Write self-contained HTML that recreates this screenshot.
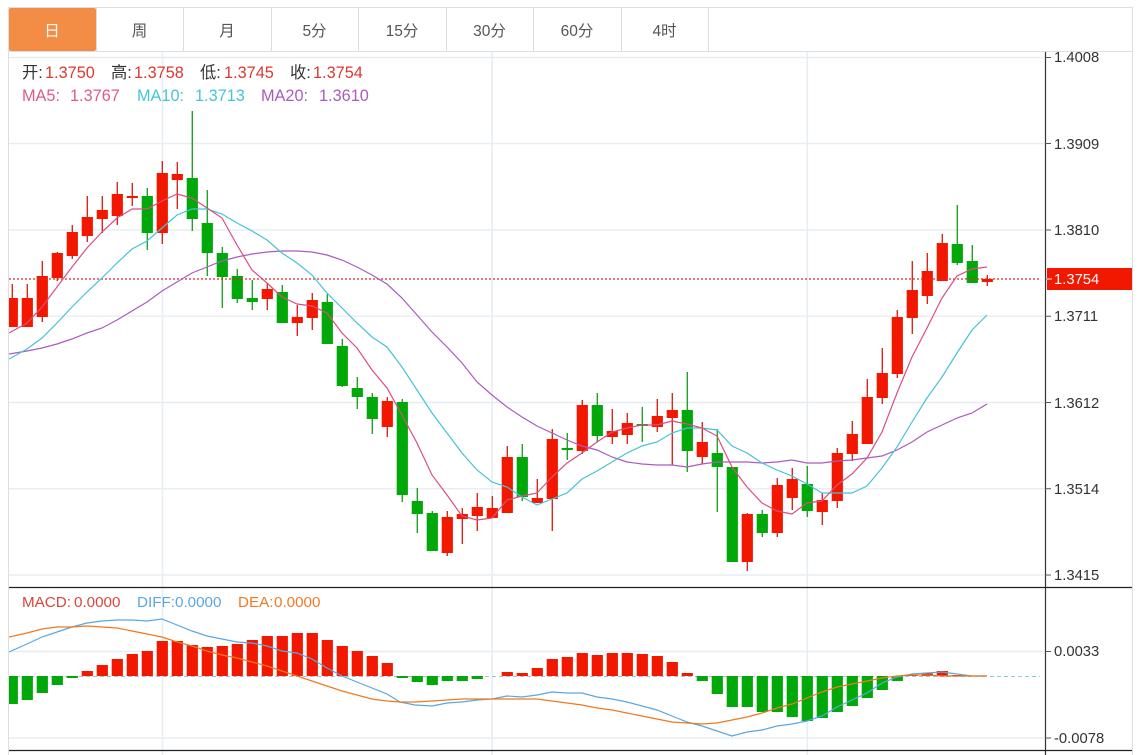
<!DOCTYPE html>
<html lang="zh"><head><meta charset="utf-8"><title>K</title>
<style>
html,body{margin:0;padding:0;background:#fff;width:1142px;height:755px;overflow:hidden}
svg{display:block;position:absolute;left:0;top:0}
text{font-family:"Liberation Sans","Noto Sans CJK SC",sans-serif}
.tab{font-size:15.5px;fill:#555;text-anchor:middle}
.ax{font-size:14.8px;fill:#333}
.l{font-size:16.3px}
.m{font-size:15.2px}
</style></head><body>
<svg width="1142" height="755" viewBox="0 0 1142 755" xmlns="http://www.w3.org/2000/svg">
<defs><clipPath id="p"><rect x="9" y="52" width="1036" height="703"/></clipPath></defs>
<rect width="1142" height="755" fill="#fff"/>
<!-- frame -->
<path d="M8.5 7.5H1132.5V755M8.5 7.5V755M9 51.5H1132" fill="none" stroke="#dcdfe2" stroke-width="1"/>
<path d="M96.5 8V51M183.5 8V51M271.5 8V51M358.5 8V51M446.5 8V51M533.5 8V51M621.5 8V51M708.5 8V51" stroke="#dcdfe2" stroke-width="1"/>
<rect x="9" y="8" width="87" height="43" rx="2" fill="#f38c44"/>
<text class="tab" x="52" y="36" style="fill:#fff">日</text>
<text class="tab" x="139.500" y="36">周</text>
<text class="tab" x="227" y="36">月</text>
<text class="tab" x="314.500" y="36">5分</text>
<text class="tab" x="402" y="36">15分</text>
<text class="tab" x="489.500" y="36">30分</text>
<text class="tab" x="577" y="36">60分</text>
<text class="tab" x="664.500" y="36">4时</text>
<!-- grid -->
<path d="M162.5 52V755M492.200 52V755M807.300 52V755" stroke="#e7eef3" stroke-width="1.6" fill="none"/>
<path d="M9 57.500H1045M9 143.500H1045M9 230H1045M9 316.200H1045M9 402.500H1045M9 488.700H1045M9 575H1045M9 651.500H1045M9 738H1045" stroke="#e7eef3" stroke-width="1.4" fill="none"/>
<g clip-path="url(#p)">
<!-- red wicks -->
<path fill="none" stroke="#d9291c" stroke-width="1.4" d="M12.3 284V327M27.3 284V327M42.3 261V322M57.3 252V281M72.3 225V259M87.3 196V242M102.3 196V233M117.3 182V225M132.3 183V206M162.3 161V244M177.3 162V209M267.3 283V310M297.3 305V336M312.3 293V330M387.3 397V437M447.3 511V556M462.3 508V544M477.3 493V531M492.3 496V518M507.3 446V513M537.3 479V503M552.3 429V531M582.3 400V454M612.3 409V444M627.3 413V444M657.3 399V432M672.3 393V465M702.3 422V464M747.3 513V571M777.3 478V537M792.3 468V510M822.3 493V525M837.3 448V508M852.3 421V461M867.3 379V444M882.3 348V404M897.3 310V378M912.3 261V334M927.3 253V304M942.3 234V281M987.3 275V286"/>
<!-- red bodies -->
<path fill="#f21800" d="M6.7 298h11.2V327h-11.2zM21.7 298h11.2V327h-11.2zM36.7 276h11.2V317h-11.2zM51.7 253h11.2V278h-11.2zM66.7 232h11.2V256h-11.2zM81.7 217h11.2V236h-11.2zM96.7 210h11.2V219h-11.2zM111.7 194h11.2V216h-11.2zM126.7 196h11.2V198h-11.2zM156.7 173h11.2V233h-11.2zM171.7 174h11.2V180h-11.2zM261.7 289h11.2V299h-11.2zM291.7 317h11.2V323h-11.2zM306.7 300h11.2V318h-11.2zM381.7 401h11.2V427h-11.2zM441.7 517h11.2V553h-11.2zM456.7 514h11.2V519h-11.2zM471.7 507h11.2V516h-11.2zM486.7 508h11.2V518h-11.2zM501.7 457h11.2V513h-11.2zM531.7 498h11.2V503h-11.2zM546.7 439h11.2V499h-11.2zM576.7 405h11.2V451h-11.2zM606.7 431h11.2V437h-11.2zM621.7 423h11.2V435h-11.2zM651.7 416h11.2V427h-11.2zM666.7 410h11.2V418h-11.2zM696.7 442h11.2V457h-11.2zM741.7 514h11.2V562h-11.2zM771.7 485h11.2V533h-11.2zM786.7 479h11.2V498h-11.2zM816.7 500h11.2V512h-11.2zM831.7 453h11.2V501h-11.2zM846.7 434h11.2V454h-11.2zM861.7 397h11.2V444h-11.2zM876.7 373h11.2V398h-11.2zM891.7 317h11.2V374h-11.2zM906.7 290h11.2V318h-11.2zM921.7 271h11.2V296h-11.2zM936.7 243h11.2V281h-11.2zM981.7 279h11.2V282h-11.2z"/>
<!-- green wicks -->
<path fill="none" stroke="#22a328" stroke-width="1.4" d="M147.3 188V250M192.3 111V231M207.3 190V276M222.3 247V308M237.3 269V303M252.3 280V310M282.3 285V323M327.3 294V344M342.3 339V387M357.3 377V409M372.3 393V434M402.3 399V502M417.3 488V533M432.3 511V551M522.3 444V501M567.3 433V460M597.3 393V442M642.3 407V442M687.3 372V472M717.3 429V512M732.3 467V562M762.3 510V537M807.3 466V517M957.3 205V265M972.3 245V283"/>
<!-- green bodies -->
<path fill="#00a80a" d="M141.7 196h11.2V233h-11.2zM186.7 178h11.2V219h-11.2zM201.7 223h11.2V253h-11.2zM216.7 253h11.2V277h-11.2zM231.7 276h11.2V299h-11.2zM246.7 298h11.2V302h-11.2zM276.7 292h11.2V323h-11.2zM321.7 302h11.2V344h-11.2zM336.7 346h11.2V386h-11.2zM351.7 388h11.2V397h-11.2zM366.7 397h11.2V419h-11.2zM396.7 402h11.2V495h-11.2zM411.7 501h11.2V514h-11.2zM426.7 513h11.2V551h-11.2zM516.7 457h11.2V497h-11.2zM561.7 448h11.2V450h-11.2zM591.7 405h11.2V436h-11.2zM636.7 424h11.2V426h-11.2zM681.7 410h11.2V451h-11.2zM711.7 453h11.2V467h-11.2zM726.7 467h11.2V562h-11.2zM756.7 514h11.2V533h-11.2zM801.7 484h11.2V511h-11.2zM951.7 244h11.2V263h-11.2zM966.7 261h11.2V283h-11.2z"/>
<!-- price line -->
<path d="M9 279H1040" stroke="#e02a1e" stroke-width="1.2" stroke-dasharray="2 2" fill="none"/>
<!-- MA20 -->
<polyline fill="none" stroke="#ab5bc0" stroke-width="1.2" points="9,354 27,351 42,348 57,344 72,339 87,333 102,328 117,320 132,311 147,302 162,291 177,282 192,273 207,267 222,261 237,257 252,254 267,252 282,251 297,251 312,252 327,255 342,260 357,267 372,275 387,284 402,298 417,315 432,332 447,347 462,363 477,382 492,395 507,407 522,417 537,426 552,433 567,440 582,446 597,450 612,457 627,462 642,464 657,465 672,465 687,467 702,464 717,462 732,462 747,462 762,463 777,462 792,460 807,463 822,463 837,461 852,460 867,458 882,456 897,450 912,442 927,432 942,425 957,418 972,413 987,404"/>
<!-- MA10 -->
<polyline fill="none" stroke="#44c3d6" stroke-width="1.2" points="9,359 27,349 42,338 57,323 72,307 87,292 102,278 117,263 132,249 147,241 162,228 177,215 192,209 207,209 222,214 237,223 252,231 267,240 282,253 297,263 312,275 327,293 342,308 357,323 372,337 387,347 402,367 417,390 432,413 447,433 462,453 477,470 492,482 507,487 522,497 537,505 552,499 567,493 582,479 597,471 612,462 627,453 642,446 657,442 672,433 687,428 702,428 717,430 732,446 747,453 762,463 777,470 792,476 807,484 822,493 837,493 852,493 867,486 882,468 897,447 912,422 927,398 942,377 957,353 972,330 987,315"/>
<!-- MA5 -->
<polyline fill="none" stroke="#db4d82" stroke-width="1.2" points="9,333 27,323 42,307 57,287 72,267 87,248 102,232 117,218 132,209 147,209 162,201 177,194 192,198 207,208 222,218 237,245 252,270 267,283 282,297 297,304 312,306 327,313 342,333 357,348 372,370 387,388 402,415 417,443 432,475 447,495 462,516 477,520 492,518 507,500 522,496 537,493 552,477 567,463 582,453 597,442 612,432 627,428 642,425 657,425 672,421 687,424 702,428 717,436 732,467 747,487 762,503 777,511 792,514 807,503 822,501 837,485 852,474 867,458 882,432 897,393 912,357 927,328 942,298 957,276 972,269 987,267"/>
<!-- MACD zero -->
<path d="M9 676.500H985" stroke="#a7c2c8" stroke-width="1" stroke-dasharray="4 3" fill="none"/>
<path d="M990 676.500H1040" stroke="#8fc7e6" stroke-width="1" stroke-dasharray="4 3" fill="none"/>
<!-- MACD red -->
<path fill="#f21800" d="M81.7 671h11.2V676h-11.2zM96.7 665h11.2V676h-11.2zM111.7 659h11.2V676h-11.2zM126.7 654h11.2V676h-11.2zM141.7 651h11.2V676h-11.2zM156.7 641h11.2V676h-11.2zM171.7 641h11.2V676h-11.2zM186.7 645h11.2V676h-11.2zM201.7 647h11.2V676h-11.2zM216.7 646h11.2V676h-11.2zM231.7 644h11.2V676h-11.2zM246.7 640h11.2V676h-11.2zM261.7 636h11.2V676h-11.2zM276.7 636h11.2V676h-11.2zM291.7 633h11.2V676h-11.2zM306.7 633h11.2V676h-11.2zM321.7 640h11.2V676h-11.2zM336.7 646h11.2V676h-11.2zM351.7 651h11.2V676h-11.2zM366.7 656h11.2V676h-11.2zM381.7 663h11.2V676h-11.2zM501.7 672h11.2V676h-11.2zM516.7 673h11.2V676h-11.2zM531.7 668h11.2V676h-11.2zM546.7 659h11.2V676h-11.2zM561.7 657h11.2V676h-11.2zM576.7 653h11.2V676h-11.2zM591.7 655h11.2V676h-11.2zM606.7 653h11.2V676h-11.2zM621.7 653h11.2V676h-11.2zM636.7 654h11.2V676h-11.2zM651.7 656h11.2V676h-11.2zM666.7 662h11.2V676h-11.2zM681.7 673h11.2V676h-11.2zM906.7 675h11.2V676h-11.2zM921.7 673.500h11.2V676h-11.2zM936.7 671h11.2V676h-11.2zM951.7 675h11.2V676h-11.2z"/>
<!-- MACD green -->
<path fill="#00a80a" d="M6.7 676h11.2V704h-11.2zM21.7 676h11.2V700h-11.2zM36.7 676h11.2V693h-11.2zM51.7 676h11.2V685h-11.2zM66.7 676h11.2V678h-11.2zM396.7 676h11.2V678h-11.2zM411.7 676h11.2V682h-11.2zM426.7 676h11.2V685h-11.2zM441.7 676h11.2V681h-11.2zM456.7 676h11.2V681h-11.2zM471.7 676h11.2V679h-11.2zM696.7 676h11.2V681h-11.2zM711.7 676h11.2V694h-11.2zM726.7 676h11.2V707h-11.2zM741.7 676h11.2V707h-11.2zM756.7 676h11.2V712h-11.2zM771.7 676h11.2V712h-11.2zM786.7 676h11.2V717h-11.2zM801.7 676h11.2V721h-11.2zM816.7 676h11.2V718h-11.2zM831.7 676h11.2V712h-11.2zM846.7 676h11.2V706h-11.2zM861.7 676h11.2V698h-11.2zM876.7 676h11.2V690h-11.2zM891.7 676h11.2V681h-11.2z"/>
<!-- DIFF -->
<polyline fill="none" stroke="#5aa7e0" stroke-width="1.2" points="9,652 27,644 42,637 57,632 72,627 87,623 102,621 117,620 132,620 147,621 162,619 177,625 192,631 207,636 222,639 237,642 252,643 267,646 282,651 297,653 312,659 327,668 342,676 357,682 372,688 387,694 400,702 415,705 432,706 447,703 462,702 477,700 492,699 507,696 522,697 537,695 552,692 567,693 582,693 597,697 612,699 627,702 642,706 657,710 672,716 687,722 702,726 717,731 732,736 747,732 762,730 777,726 792,724 807,721 822,716 837,707 852,700 867,693 882,683 897,677 912,674 927,673 942,672 957,674 972,676 987,676"/>
<!-- DEA -->
<polyline fill="none" stroke="#ee7a22" stroke-width="1.2" points="9,637 27,633 42,629 57,627 72,627 87,626 102,627 117,628 132,631 147,634 162,637 177,642 192,646 207,651 222,655 237,658 252,662 267,666 282,671 297,676 312,681 327,686 342,691 357,695 372,699 387,701 400,702 415,702 432,701 447,700 462,699 477,699 492,699 507,699 522,699 537,699 552,701 567,703 582,705 597,708 612,710 627,713 642,716 657,719 672,722 687,723 702,724 717,723 732,720 747,717 762,713 777,708 792,704 807,698 822,692 837,687 852,684 867,681 882,678 897,676 912,675 927,675 942,676 957,676 972,676 987,676"/>
</g>
<!-- axis -->
<path d="M1045.500 52V755" stroke="#333" stroke-width="1.2" fill="none"/>
<path d="M9 587.500H1132M9 750.500H1132" stroke="#222" stroke-width="1.2" fill="none"/>
<path d="M1045 57.500H1051M1045 143.500H1051M1045 230H1051M1045 316.200H1051M1045 402.500H1051M1045 488.700H1051M1045 575H1051M1045 651.500H1051M1045 738H1051M1045 279H1051" stroke="#555" stroke-width="1" fill="none"/>
<rect x="1047" y="268" width="85" height="22" fill="#f21800"/>
<path d="M1047 279H1052" stroke="#fff" stroke-width="1"/>
<text class="ax" x="1054" y="62">1.4008</text>
<text class="ax" x="1054" y="149">1.3909</text>
<text class="ax" x="1054" y="235">1.3810</text>
<text class="ax" x="1054" y="321">1.3711</text>
<text class="ax" x="1054" y="408">1.3612</text>
<text class="ax" x="1054" y="494">1.3514</text>
<text class="ax" x="1054" y="580">1.3415</text>
<text class="ax" x="1054" y="656">0.0033</text>
<text class="ax" x="1054" y="743">-0.0078</text>
<text class="ax" x="1054" y="284" style="fill:#fff">1.3754</text>
<!-- legend -->
<g class="l">
<text x="22" y="78" fill="#333">开:</text><text x="45" y="78" fill="#d93a2e">1.3750</text>
<text x="111" y="78" fill="#333">高:</text><text x="134" y="78" fill="#d93a2e">1.3758</text>
<text x="200" y="78" fill="#333">低:</text><text x="224" y="78" fill="#d93a2e">1.3745</text>
<text x="290" y="78" fill="#333">收:</text><text x="313" y="78" fill="#d93a2e">1.3754</text>
<text x="22" y="101" fill="#de5a8c">MA5:</text><text x="70" y="101" fill="#de5a8c">1.3767</text>
<text x="137" y="101" fill="#45c4d8">MA10:</text><text x="195" y="101" fill="#45c4d8">1.3713</text>
<text x="261" y="101" fill="#ab5bc0">MA20:</text><text x="319" y="101" fill="#ab5bc0">1.3610</text>
</g>
<g class="m">
<text x="22" y="607" fill="#d9453a">MACD:</text><text x="74" y="607" fill="#d9453a">0.0000</text>
<text x="137" y="607" fill="#5aa7e0">DIFF:</text><text x="175" y="607" fill="#5aa7e0">0.0000</text>
<text x="238" y="607" fill="#ee7a22">DEA:</text><text x="274" y="607" fill="#ee7a22">0.0000</text>
</g>
</svg>
</body></html>
